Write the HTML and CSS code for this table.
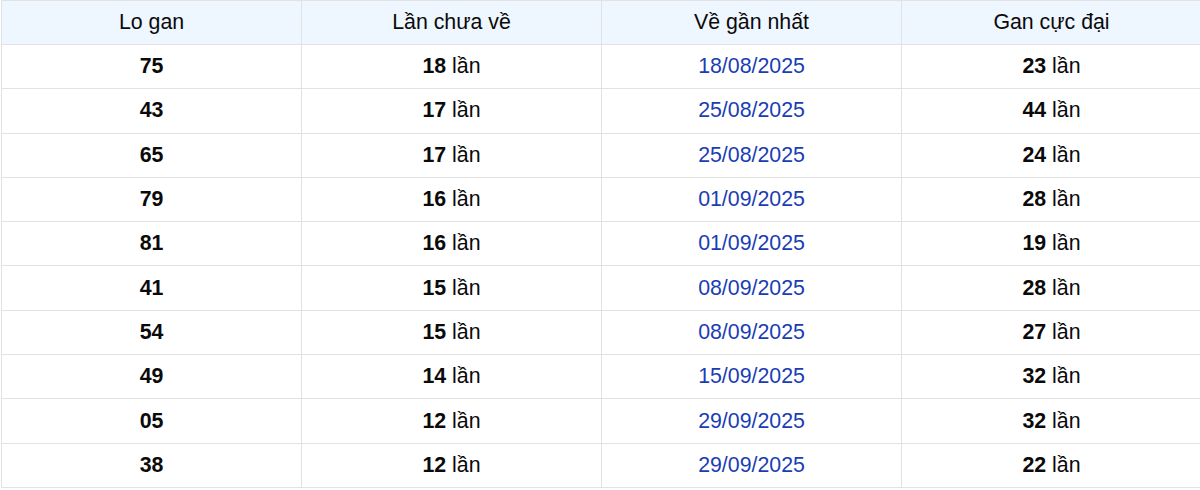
FILE: index.html
```html
<!DOCTYPE html>
<html lang="vi">
<head>
<meta charset="utf-8">
<link rel="stylesheet" href="styles.css">
</head>
<body>
<div class="wrap">
<table class="gan">
  <thead>
    <tr><th>Lo gan</th><th>Lần chưa về</th><th>Về gần nhất</th><th>Gan cực đại</th></tr>
  </thead>
  <tbody>
    <tr><td><b>75</b></td><td><b>18</b> lần</td><td class="date">18/08/2025</td><td><b>23</b> lần</td></tr>
    <tr><td><b>43</b></td><td><b>17</b> lần</td><td class="date">25/08/2025</td><td><b>44</b> lần</td></tr>
    <tr><td><b>65</b></td><td><b>17</b> lần</td><td class="date">25/08/2025</td><td><b>24</b> lần</td></tr>
    <tr><td><b>79</b></td><td><b>16</b> lần</td><td class="date">01/09/2025</td><td><b>28</b> lần</td></tr>
    <tr><td><b>81</b></td><td><b>16</b> lần</td><td class="date">01/09/2025</td><td><b>19</b> lần</td></tr>
    <tr><td><b>41</b></td><td><b>15</b> lần</td><td class="date">08/09/2025</td><td><b>28</b> lần</td></tr>
    <tr><td><b>54</b></td><td><b>15</b> lần</td><td class="date">08/09/2025</td><td><b>27</b> lần</td></tr>
    <tr><td><b>49</b></td><td><b>14</b> lần</td><td class="date">15/09/2025</td><td><b>32</b> lần</td></tr>
    <tr><td><b>05</b></td><td><b>12</b> lần</td><td class="date">29/09/2025</td><td><b>32</b> lần</td></tr>
    <tr><td><b>38</b></td><td><b>12</b> lần</td><td class="date">29/09/2025</td><td><b>22</b> lần</td></tr>
  </tbody>
</table>
</div>
</body>
</html>
```
FILE: styles.css
```css
html, body {
  margin: 0;
  padding: 0;
  background: #ffffff;
}
.wrap {
  padding-left: 1px;
}
.gan {
  border-collapse: collapse;
  table-layout: fixed;
  width: 1201px;
  font-family: "Liberation Sans", Arial, sans-serif;
  font-size: 21.33px;
  color: #0a0a0a;
}
.gan th,
.gan td {
  border: 1px solid #e2e2e2;
  text-align: center;
  vertical-align: middle;
  padding: 0;
  width: 25%;
}
.gan th {
  font-weight: normal;
  background: #eef6ff;
  height: 43px;
}
.gan td {
  height: 43.3px;
}
.gan b {
  font-weight: bold;
}
.gan .date {
  color: #1a3db4;
}
```
